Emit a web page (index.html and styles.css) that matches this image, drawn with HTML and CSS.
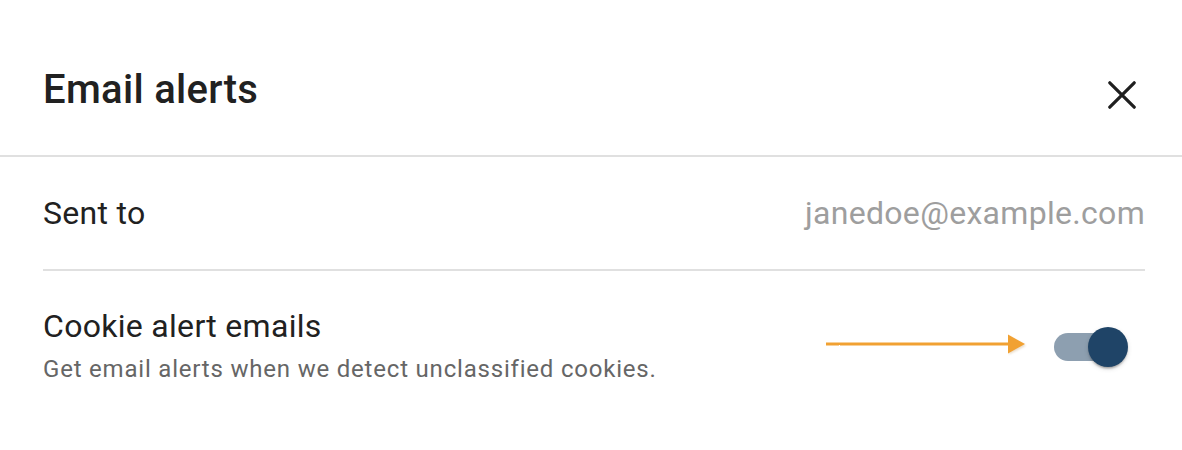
FILE: index.html
```html
<!DOCTYPE html>
<html lang="en">
<head>
<meta charset="utf-8">
<title>Email alerts</title>
<link rel="stylesheet" href="styles.css">
</head>
<body>
<div class="dialog">
  <header class="dialog-header">
    <h1 class="dialog-title">Email alerts</h1>
    <button class="close-btn" aria-label="Close">
      <svg width="28" height="28" viewBox="0 0 28 28"><path d="M1.8 1.8L26.2 26.2M26.2 1.8L1.8 26.2" stroke="#1f1f1f" stroke-width="3.2" stroke-linecap="round" fill="none"/></svg>
    </button>
  </header>
  <div class="dialog-body">
    <div class="row row-sent">
      <span class="row-label">Sent to</span>
      <span class="row-value">janedoe@example.com</span>
    </div>
    <div class="row row-toggle">
      <div class="row-text">
        <div class="row-label">Cookie alert emails</div>
        <div class="row-desc">Get email alerts when we detect unclassified cookies.</div>
      </div>
      <div class="row-control">
        <svg class="arrow" width="204" height="24" viewBox="0 0 204 24">
          <defs>
            <filter id="rough" x="-2%" y="-60%" width="104%" height="220%">
              <feTurbulence type="fractalNoise" baseFrequency="0.9" numOctaves="1" seed="3" result="n"/>
              <feDisplacementMap in="SourceGraphic" in2="n" scale="1.6" xChannelSelector="R" yChannelSelector="G"/>
            </filter>
            <filter id="sh" x="-5%" y="-80%" width="110%" height="260%">
              <feGaussianBlur stdDeviation="0.9"/>
            </filter>
          </defs>
          <path d="M2 13.6 L186 13.6" stroke="#b88a4a" stroke-width="3" opacity="0.3" filter="url(#sh)"/>
          <polygon points="185,4.5 202,13.6 185,22.5" fill="#b88a4a" opacity="0.3" filter="url(#sh)"/>
          <g filter="url(#rough)">
            <path d="M2 12 L186 12" stroke="#f1a133" stroke-width="3.2"/>
            <polygon points="184,2.5 201,12 184,21.5" fill="#f1a133"/>
          </g>
        </svg>
        <div class="switch" role="switch" aria-checked="true">
          <span class="switch-track"></span>
          <span class="switch-thumb"></span>
        </div>
      </div>
    </div>
  </div>
</div>
</body>
</html>
```

FILE: styles.css
```css
html, body {
  margin: 0;
  padding: 0;
  background: #ffffff;
}

body {
  font-family: Roboto, "Liberation Sans", Arial, sans-serif;
  color: #212121;
}

.dialog {
  width: 1182px;
}

.dialog-header {
  height: 130px;
  padding: 25px 46px 0 43px;
  display: flex;
  align-items: center;
  justify-content: space-between;
  border-bottom: 2px solid #e0e0e0;
}

.dialog-title {
  margin: 0;
  font-size: 40px;
  font-weight: 500;
  line-height: 40px;
  letter-spacing: 0.3px;
  color: #212121;
}

.close-btn {
  border: 0;
  background: none;
  padding: 0;
  margin-top: 9px;
  width: 28px;
  height: 28px;
  display: flex;
  cursor: pointer;
}

.dialog-body {
  padding: 0 37px 0 43px;
}

.row {
  display: flex;
  align-items: center;
  justify-content: space-between;
}

.row-sent {
  height: 112px;
  border-bottom: 2px solid #e0e0e0;
}

.row-label {
  font-size: 32px;
  line-height: 40px;
  letter-spacing: 0.3px;
  color: #212121;
}

.row-value {
  font-size: 32px;
  line-height: 40px;
  letter-spacing: 0.3px;
  color: #9e9e9e;
}

.row-toggle {
  height: 152px;
}

.row-desc {
  margin-top: 4px;
  font-size: 24px;
  line-height: 38px;
  letter-spacing: 0.8px;
  color: #666666;
}

.row-control {
  display: flex;
  align-items: center;
  margin-right: 17px;
}

.arrow {
  display: block;
  margin-right: 26px;
  margin-top: -7px;
}

.switch {
  position: relative;
  width: 74px;
  height: 40px;
}

.switch-track {
  position: absolute;
  left: 0;
  top: 6px;
  width: 68px;
  height: 28px;
  border-radius: 14px;
  background: #8d9fb0;
}

.switch-thumb {
  position: absolute;
  right: 0;
  top: 0;
  width: 40px;
  height: 40px;
  border-radius: 50%;
  background: #1f4467;
  box-shadow: 0 3px 2px -2px rgba(0,0,0,0.2), 0 2px 2px 0 rgba(0,0,0,0.14), 0 2px 5px 0 rgba(0,0,0,0.12);
}
```
